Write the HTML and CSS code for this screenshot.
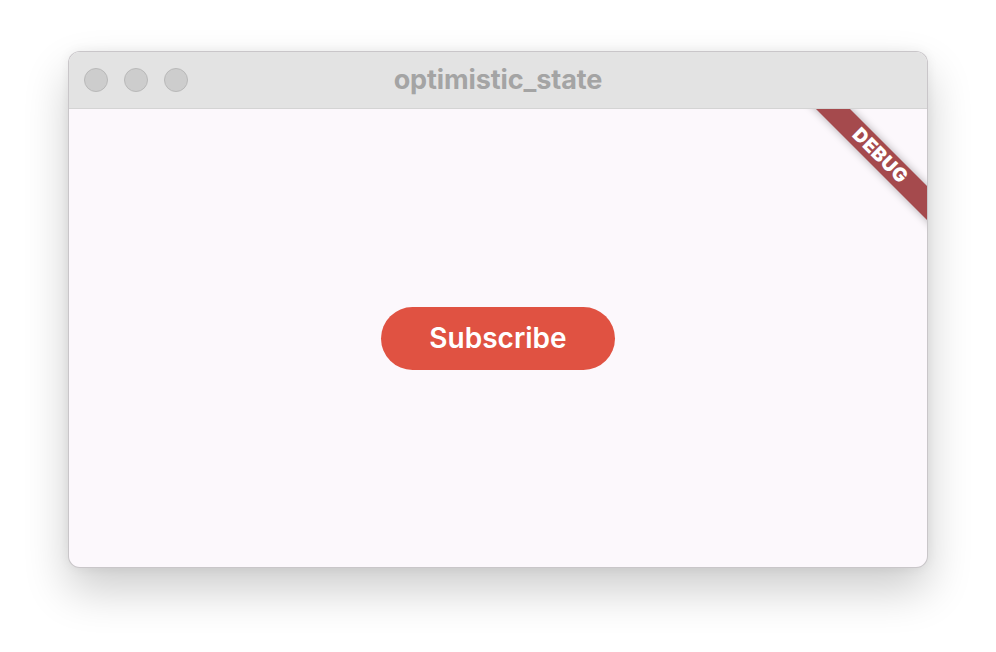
FILE: index.html
```html
<!DOCTYPE html>
<html>
<head>
<meta charset="utf-8">
<link rel="stylesheet" href="styles.css">
</head>
<body>
<div class="desktop">
  <div class="window">
    <div class="titlebar">
      <div class="lights">
        <span class="light"></span>
        <span class="light"></span>
        <span class="light"></span>
      </div>
      <div class="title">optimistic_state</div>
    </div>
    <div class="content">
      <button class="subscribe">Subscribe</button>
      <div class="banner"><span>DEBUG</span></div>
    </div>
  </div>
</div>
</body>
</html>
```
FILE: styles.css
```css
html, body {
  margin: 0;
  padding: 0;
  background: #ffffff;
}
.desktop {
  width: 996px;
  height: 652px;
  padding: 51px 0 0 68px;
  box-sizing: border-box;
}
.window {
  width: 860px;
  height: 517px;
  border-radius: 12px;
  overflow: hidden;
  display: flex;
  flex-direction: column;
  box-sizing: border-box;
  border: 1px solid rgba(0,0,0,0.2);
  box-shadow: 0 22px 45px rgba(0,0,0,0.2), 0 0 12px rgba(0,0,0,0.06);
  background: #fcf8fc;
}
.titlebar {
  height: 57px;
  flex: none;
  background: #e3e3e3;
  border-bottom: 1px solid #d4d4d4;
  box-sizing: border-box;
  display: flex;
  align-items: center;
  position: relative;
}
.lights {
  display: flex;
  gap: 16px;
  padding-left: 15px;
}
.light {
  width: 24px;
  height: 24px;
  border-radius: 50%;
  background: #cdcdcd;
  box-sizing: border-box;
  border: 1px solid #b9b9b9;
}
.title {
  position: absolute;
  left: 0;
  right: 0;
  top: 12px;
  text-align: center;
  font-family: Inter, "Liberation Sans", sans-serif;
  font-weight: 700;
  font-size: 27px;
  line-height: 32px;
  color: #a4a4a4;
  letter-spacing: -0.1px;
}
.content {
  flex: 1;
  position: relative;
  overflow: hidden;
  display: flex;
  align-items: center;
  justify-content: center;
}
.subscribe {
  width: 234px;
  height: 63px;
  border: none;
  border-radius: 32px;
  background: #e05242;
  color: #ffffff;
  font-family: Inter, "Liberation Sans", sans-serif;
  font-weight: 600;
  font-size: 28px;
  padding: 0;
}
.banner {
  position: absolute;
  width: 240px;
  height: 24px;
  left: 691px;
  top: 35px;
  transform: rotate(45deg);
  background: #a54a4d;
  box-shadow: 0 0 9px rgba(0,0,0,0.3);
  display: flex;
  align-items: center;
  justify-content: center;
}
.banner span {
  font-family: Inter, "Liberation Sans", sans-serif;
  font-weight: 900;
  font-size: 19px;
  line-height: 24px;
  color: #ffffff;
  letter-spacing: 0.6px;
}
```
